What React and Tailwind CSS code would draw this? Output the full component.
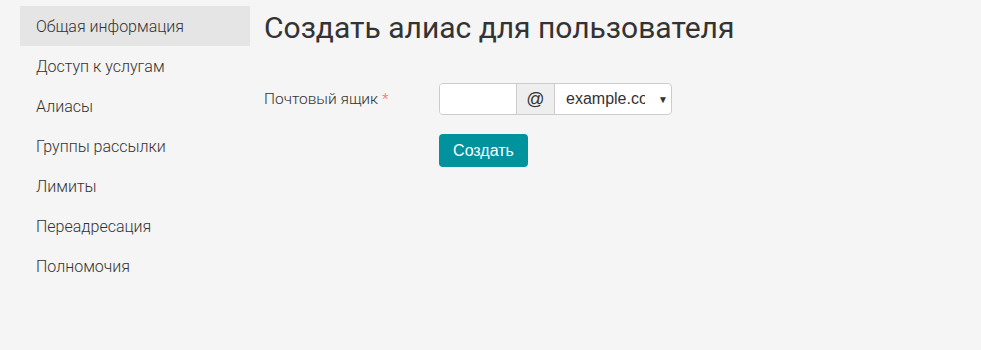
export default function App() {
  const items = [
    "Общая информация",
    "Доступ к услугам",
    "Алиасы",
    "Группы рассылки",
    "Лимиты",
    "Переадресация",
    "Полномочия",
  ];
  return (
    <div className="w-[981px] h-[350px] bg-[#f5f5f5] flex" style={{ fontFamily: "Roboto, sans-serif" }}>
      <div className="w-[230px] ml-[20px] mt-[6px] flex flex-col">
        {items.map((t, i) => (
          <div
            key={t}
            className={`h-[40px] flex items-center pl-[16px] pt-[1px] text-[16px] font-light text-[#333] ${i === 0 ? "bg-[#e5e5e5]" : ""}`}
          >
            {t}
          </div>
        ))}
      </div>
      <div className="ml-[14px] flex flex-col">
        <h1 className="text-[30px] text-[#333] leading-[36px] mt-[10px]">Создать алиас для пользователя</h1>
        <div className="flex mt-[37px]">
          <div className="w-[175px] text-[15.5px] font-light text-[#333] pt-[5px]">
            Почтовый ящик <span className="text-[#ef6c6c]">*</span>
          </div>
          <div className="flex flex-col">
            <div className="flex h-[32px] border border-[#ccc] rounded-[4px] bg-white overflow-hidden" style={{ fontFamily: '"Liberation Sans", Arial, sans-serif' }}>
              <input aria-label="mailbox" className="w-[76px] h-full outline-none px-2 bg-white" />
              <div className="w-[39px] border-l border-r border-[#ccc] bg-[#eee] flex items-center justify-center text-[18px] text-[#333]">@</div>
              <div className="w-[116px] flex items-center">
                <span className="ml-[11px] w-[79px] overflow-hidden whitespace-nowrap text-[16px] text-[#333]">example.com</span>
                <span className="ml-[13px] text-[10px] text-[#333]">▼</span>
              </div>
            </div>
            <button
              className="mt-[19px] w-[89px] h-[33px] bg-[#00939e] text-white text-[16px] rounded-[4px]"
              style={{ fontFamily: '"Liberation Sans", Arial, sans-serif' }}
            >
              Создать
            </button>
          </div>
        </div>
      </div>
    </div>
  );
}
